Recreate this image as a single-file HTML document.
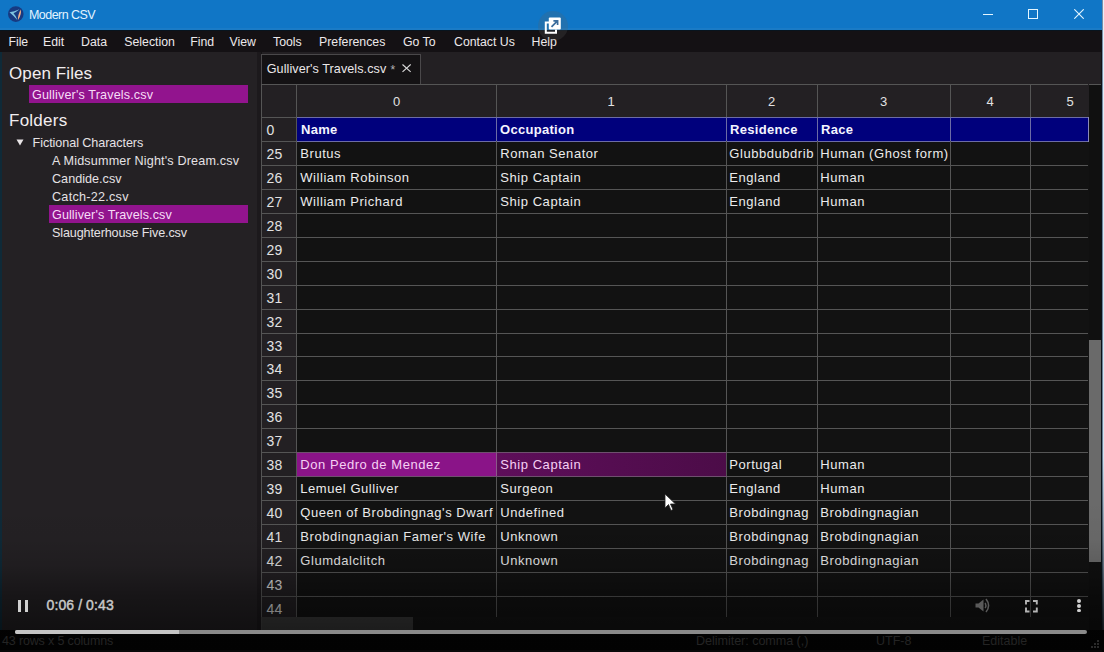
<!DOCTYPE html>
<html><head><meta charset="utf-8">
<style>
*{margin:0;padding:0;box-sizing:border-box}
html,body{width:1104px;height:652px;overflow:hidden;background:#141214;font-family:"Liberation Sans",sans-serif;color:#e8e6e8;position:relative}
.a{position:absolute;white-space:pre}
.mi{position:absolute;top:35px;font-size:12.3px;color:#ece8ea;white-space:pre}
.si{position:absolute;font-size:12.6px;color:#e6e2e4;white-space:pre}
.gt{position:absolute;font-size:13px;letter-spacing:0.55px;color:#ececec;white-space:pre}
.gb{position:absolute;font-size:13px;font-weight:bold;letter-spacing:0.3px;color:#f4f4ff;white-space:pre}
.rn{position:absolute;font-size:14px;letter-spacing:0.2px;color:#e2e2e2;white-space:pre}
.hd{position:absolute;font-size:13px;color:#e2e2e2;white-space:pre;text-align:center}
</style></head><body>

<div class="a" style="left:0;top:0;width:1104px;height:30px;background:#1076c6"></div>
<svg class="a" style="left:7px;top:6px" width="18" height="17" viewBox="0 0 18 17">
<circle cx="8.8" cy="8.1" r="7.8" fill="#173a82"/>
<path d="M2.5 6.2 Q7 5.5 12.5 3.2 Q8.5 6.5 6.5 7.2 Q8.5 9 10.5 14.2 Q7.5 10.5 2.5 6.2 Z" fill="#7ec4e0"/>
<path d="M13.6 3.5 Q15 8 11 14 Q10.6 9.5 13.6 3.5 Z" fill="#f4b088"/>
</svg>
<div class="a" style="left:29px;top:7.5px;font-size:12.5px;letter-spacing:-0.55px;color:#e3f4ff">Modern CSV</div>
<div class="a" style="left:983px;top:14px;width:10px;height:1px;background:#e4f6ff"></div>
<div class="a" style="left:1028px;top:9px;width:10px;height:10px;border:1px solid #e4f6ff"></div>
<svg class="a" style="left:1074px;top:9px" width="10" height="10" viewBox="0 0 10 10"><path d="M0.3 0.3 L9.7 9.7 M9.7 0.3 L0.3 9.7" stroke="#e4f6ff" stroke-width="1.1"/></svg>
<div class="a" style="left:0;top:30px;width:1104px;height:22px;background:#141114"></div>
<div class="a" style="left:0;top:30px;width:1102px;height:1px;background:#08141e"></div>
<div class="a" style="left:0;top:28px;width:1102px;height:2px;background:#1a7bc6"></div>
<div class="mi" style="left:8.4px">File</div>
<div class="mi" style="left:43px">Edit</div>
<div class="mi" style="left:81px">Data</div>
<div class="mi" style="left:124.3px">Selection</div>
<div class="mi" style="left:190.2px">Find</div>
<div class="mi" style="left:229.5px">View</div>
<div class="mi" style="left:273px">Tools</div>
<div class="mi" style="left:319px">Preferences</div>
<div class="mi" style="left:403px">Go To</div>
<div class="mi" style="left:454px">Contact Us</div>
<div class="mi" style="left:531.6px">Help</div>
<div class="a" style="left:0;top:52px;width:257px;height:578px;background:#242124"></div>
<div class="a" style="left:257px;top:52px;width:4px;height:578px;background:#1c191c"></div>
<div class="a" style="left:0;top:52px;width:2px;height:578px;background:#0f2a38"></div>
<div class="a" style="left:9px;top:63.5px;font-size:17px;letter-spacing:0.1px;color:#f2eef0">Open Files</div>
<div class="a" style="left:29px;top:85px;width:219px;height:18px;background:#92148e"></div>
<div class="si" style="left:32px;top:88px;letter-spacing:0.15px;color:#f6dcf6">Gulliver's Travels.csv</div>
<div class="a" style="left:9px;top:111px;font-size:17px;letter-spacing:0.25px;color:#f2eef0">Folders</div>
<svg class="a" style="left:16px;top:139px" width="8" height="7" viewBox="0 0 8 7"><path d="M0.5 0.5 L7.5 0.5 L4 6.5 Z" fill="#e8e4e6"/></svg>
<div class="si" style="left:32.6px;top:136px;letter-spacing:-0.07px">Fictional Characters</div>
<div class="a" style="left:49px;top:205px;width:199px;height:18px;background:#92148e"></div>
<div class="si" style="left:52px;top:154px;letter-spacing:0.17px;">A Midsummer Night's Dream.csv</div>
<div class="si" style="left:52px;top:172px;letter-spacing:0.02px;">Candide.csv</div>
<div class="si" style="left:52px;top:190px;letter-spacing:0.27px;">Catch-22.csv</div>
<div class="si" style="left:52px;top:208px;letter-spacing:0.09px; color:#f6dcf6;">Gulliver's Travels.csv</div>
<div class="si" style="left:52px;top:226px;letter-spacing:-0.13px;">Slaughterhouse Five.csv</div>
<div class="a" style="left:262px;top:52px;width:839px;height:33px;background:#232023"></div>
<div class="a" style="left:261px;top:54px;width:160px;height:31px;background:#141214;border:1px solid #4a484a;border-bottom:none"></div>
<div class="si" style="left:266.7px;top:62px;letter-spacing:0.08px;color:#ebe7e9">Gulliver's Travels.csv</div>
<div class="a" style="left:390.5px;top:62.5px;font-size:12px;color:#b4b4b4">*</div>
<svg class="a" style="left:401.8px;top:64.3px" width="9.2" height="8.4" viewBox="0 0 9.2 8.4"><path d="M0.5 0.5 L8.7 7.9 M8.7 0.5 L0.5 7.9" stroke="#dcdcdc" stroke-width="1.1"/></svg>
<div class="a" style="left:261px;top:84px;width:828px;height:533px;background:#121212;overflow:hidden">
<div class="a" style="left:0;top:0;width:828px;height:33px;background:#232023"></div>
<div class="a" style="left:0;top:0;width:35px;height:533px;background:#232023"></div>
<div class="a" style="left:36px;top:33px;width:792px;height:25px;background:#00007c;border:1px solid #6c6ca6;border-left:none;border-right:none"></div>
<div class="a" style="left:36px;top:368px;width:199px;height:24px;background:#8a1488"></div>
<div class="a" style="left:235px;top:368px;width:230px;height:24px;background:linear-gradient(90deg,#5e0e5a,#4c0c48)"></div>
<div class="a" style="left:0;top:33px;width:827px;height:1px;background:#555"></div>
<div class="a" style="left:0;top:81px;width:827px;height:1px;background:#555"></div>
<div class="a" style="left:0;top:105px;width:827px;height:1px;background:#555"></div>
<div class="a" style="left:0;top:129px;width:827px;height:1px;background:#555"></div>
<div class="a" style="left:0;top:153px;width:827px;height:1px;background:#555"></div>
<div class="a" style="left:0;top:177px;width:827px;height:1px;background:#555"></div>
<div class="a" style="left:0;top:201px;width:827px;height:1px;background:#555"></div>
<div class="a" style="left:0;top:225px;width:827px;height:1px;background:#555"></div>
<div class="a" style="left:0;top:249px;width:827px;height:1px;background:#555"></div>
<div class="a" style="left:0;top:272px;width:827px;height:1px;background:#555"></div>
<div class="a" style="left:0;top:296px;width:827px;height:1px;background:#555"></div>
<div class="a" style="left:0;top:320px;width:827px;height:1px;background:#555"></div>
<div class="a" style="left:0;top:344px;width:827px;height:1px;background:#555"></div>
<div class="a" style="left:0;top:368px;width:827px;height:1px;background:#555"></div>
<div class="a" style="left:0;top:392px;width:827px;height:1px;background:#555"></div>
<div class="a" style="left:0;top:416px;width:827px;height:1px;background:#555"></div>
<div class="a" style="left:0;top:440px;width:827px;height:1px;background:#555"></div>
<div class="a" style="left:0;top:464px;width:827px;height:1px;background:#555"></div>
<div class="a" style="left:0;top:488px;width:827px;height:1px;background:#555"></div>
<div class="a" style="left:0;top:512px;width:827px;height:1px;background:#555"></div>
<div class="a" style="left:0;top:536px;width:827px;height:1px;background:#555"></div>
<div class="a" style="left:0;top:0;width:827px;height:1px;background:#555"></div>
<div class="a" style="left:36px;top:33px;width:792px;height:1px;background:#6c6ca6"></div>
<div class="a" style="left:36px;top:57px;width:792px;height:1px;background:#6c6ca6"></div>
<div class="a" style="left:0;top:57px;width:36px;height:1px;background:#555"></div>
<div class="a" style="left:0px;top:0;width:1px;height:533px;background:#555"></div>
<div class="a" style="left:35px;top:0;width:1px;height:533px;background:#555"></div>
<div class="a" style="left:235px;top:0;width:1px;height:533px;background:#555"></div>
<div class="a" style="left:465px;top:0;width:1px;height:533px;background:#555"></div>
<div class="a" style="left:556px;top:0;width:1px;height:533px;background:#555"></div>
<div class="a" style="left:689px;top:0;width:1px;height:533px;background:#555"></div>
<div class="a" style="left:769px;top:0;width:1px;height:533px;background:#555"></div>
<div class="a" style="left:235px;top:33px;width:1px;height:24px;background:#6c6ca6"></div>
<div class="a" style="left:465px;top:33px;width:1px;height:24px;background:#6c6ca6"></div>
<div class="a" style="left:556px;top:33px;width:1px;height:24px;background:#6c6ca6"></div>
<div class="a" style="left:689px;top:33px;width:1px;height:24px;background:#6c6ca6"></div>
<div class="a" style="left:769px;top:33px;width:1px;height:24px;background:#6c6ca6"></div>
<div class="a" style="left:35px;top:368px;width:431px;height:1px;background:#6e506e"></div>
<div class="a" style="left:35px;top:392px;width:431px;height:1px;background:#6e506e"></div>
<div class="a" style="left:235px;top:368px;width:1px;height:24px;background:#8a5a88"></div>
<div class="a" style="left:827px;top:33px;width:1px;height:25px;background:#8a8ab8"></div>
<div class="a" style="left:828px;top:33px;width:20px;height:25px;background:#141414"></div>
<div class="hd" style="left:36px;top:10px;width:199px">0</div>
<div class="hd" style="left:235px;top:10px;width:230px">1</div>
<div class="hd" style="left:465px;top:10px;width:91px">2</div>
<div class="hd" style="left:556px;top:10px;width:133px">3</div>
<div class="hd" style="left:689px;top:10px;width:80px">4</div>
<div class="hd" style="left:769px;top:10px;width:80px">5</div>
<div class="rn" style="left:5.5px;top:38px">0</div>
<div class="gb" style="left:40px;top:38px;">Name</div>
<div class="gb" style="left:239px;top:38px;">Occupation</div>
<div class="gb" style="left:469px;top:38px;">Residence</div>
<div class="gb" style="left:560px;top:38px;">Race</div>
<div class="rn" style="left:5.5px;top:62px">25</div>
<div class="gt" style="left:39.3px;top:62px;">Brutus</div>
<div class="gt" style="left:239.3px;top:62px;">Roman Senator</div>
<div class="gt" style="left:468.3px;top:62px;">Glubbdubdrib</div>
<div class="gt" style="left:559.3px;top:62px;">Human (Ghost form)</div>
<div class="rn" style="left:5.5px;top:86px">26</div>
<div class="gt" style="left:39.3px;top:86px;">William Robinson</div>
<div class="gt" style="left:239.3px;top:86px;">Ship Captain</div>
<div class="gt" style="left:468.3px;top:86px;">England</div>
<div class="gt" style="left:559.3px;top:86px;">Human</div>
<div class="rn" style="left:5.5px;top:110px">27</div>
<div class="gt" style="left:39.3px;top:110px;">William Prichard</div>
<div class="gt" style="left:239.3px;top:110px;">Ship Captain</div>
<div class="gt" style="left:468.3px;top:110px;">England</div>
<div class="gt" style="left:559.3px;top:110px;">Human</div>
<div class="rn" style="left:5.5px;top:134px">28</div>
<div class="rn" style="left:5.5px;top:158px">29</div>
<div class="rn" style="left:5.5px;top:182px">30</div>
<div class="rn" style="left:5.5px;top:206px">31</div>
<div class="rn" style="left:5.5px;top:230px">32</div>
<div class="rn" style="left:5.5px;top:254px">33</div>
<div class="rn" style="left:5.5px;top:277px">34</div>
<div class="rn" style="left:5.5px;top:301px">35</div>
<div class="rn" style="left:5.5px;top:325px">36</div>
<div class="rn" style="left:5.5px;top:349px">37</div>
<div class="rn" style="left:5.5px;top:373px">38</div>
<div class="gt" style="left:39.3px;top:373px;color:#f6d0f4;">Don Pedro de Mendez</div>
<div class="gt" style="left:239.3px;top:373px;color:#f6d0f4;">Ship Captain</div>
<div class="gt" style="left:468.3px;top:373px;">Portugal</div>
<div class="gt" style="left:559.3px;top:373px;">Human</div>
<div class="rn" style="left:5.5px;top:397px">39</div>
<div class="gt" style="left:39.3px;top:397px;">Lemuel Gulliver</div>
<div class="gt" style="left:239.3px;top:397px;">Surgeon</div>
<div class="gt" style="left:468.3px;top:397px;">England</div>
<div class="gt" style="left:559.3px;top:397px;">Human</div>
<div class="rn" style="left:5.5px;top:421px">40</div>
<div class="gt" style="left:39.3px;top:421px;">Queen of Brobdingnag&#39;s Dwarf</div>
<div class="gt" style="left:239.3px;top:421px;">Undefined</div>
<div class="gt" style="left:468.3px;top:421px;">Brobdingnag</div>
<div class="gt" style="left:559.3px;top:421px;">Brobdingnagian</div>
<div class="rn" style="left:5.5px;top:445px">41</div>
<div class="gt" style="left:39.3px;top:445px;">Brobdingnagian Famer&#39;s Wife</div>
<div class="gt" style="left:239.3px;top:445px;">Unknown</div>
<div class="gt" style="left:468.3px;top:445px;">Brobdingnag</div>
<div class="gt" style="left:559.3px;top:445px;">Brobdingnagian</div>
<div class="rn" style="left:5.5px;top:469px">42</div>
<div class="gt" style="left:39.3px;top:469px;">Glumdalclitch</div>
<div class="gt" style="left:239.3px;top:469px;">Unknown</div>
<div class="gt" style="left:468.3px;top:469px;">Brobdingnag</div>
<div class="gt" style="left:559.3px;top:469px;">Brobdingnagian</div>
<div class="rn" style="left:5.5px;top:493px">43</div>
<div class="rn" style="left:5.5px;top:517px">44</div>
</div>
<div class="a" style="left:1089px;top:84px;width:12px;height:546px;background:#101010"></div>
<div class="a" style="left:1089px;top:340px;width:12px;height:222px;background:#6a6a6a"></div>
<div class="a" style="left:1089px;top:84px;width:12px;height:1px;background:#555"></div>
<div class="a" style="left:1101px;top:84px;width:1px;height:568px;background:#0c1218"></div>
<div class="a" style="left:1102px;top:0px;width:1px;height:652px;background:linear-gradient(180deg,#7890a8 0%,#6a8098 70%,#30404c 92%,#101418 100%)"></div>
<div class="a" style="left:1103px;top:0px;width:1px;height:652px;background:linear-gradient(180deg,#e4f0fa 0%,#d0e0ee 70%,#506070 92%,#181c20 100%)"></div>
<div class="a" style="left:262px;top:617px;width:827px;height:13px;background:#141414"></div>
<div class="a" style="left:262px;top:617px;width:151px;height:13px;background:#3c3c3c"></div>
<div class="a" style="left:0;top:630px;width:1104px;height:22px;background:#050505"></div>
<div class="a" style="left:0;top:650px;width:1102px;height:2px;background:#161616"></div>
<div class="a" style="left:261px;top:617px;width:1px;height:13px;background:#444"></div>
<div class="a" style="left:0;top:500px;width:1104px;height:152px;background:linear-gradient(180deg,rgba(0,0,0,0) 0%,rgba(0,0,0,0.03) 26%,rgba(0,0,0,0.12) 43%,rgba(0,0,0,0.36) 63%,rgba(0,0,0,0.5) 82%,rgba(0,0,0,0.6) 100%)"></div>
<div class="a" style="left:2px;top:634px;font-size:12.5px;letter-spacing:-0.15px;color:#242424">43 rows x 5 columns</div>
<div class="a" style="left:696px;top:634px;font-size:12.6px;letter-spacing:-0.05px;color:#242424">Delimiter: comma (,)</div>
<div class="a" style="left:876px;top:634px;font-size:12.5px;color:#242424">UTF-8</div>
<div class="a" style="left:982px;top:634px;font-size:12.5px;color:#242424">Editable</div>
<div class="a" style="left:15px;top:630px;width:1072px;height:4px;background:#8a8a8a;border-radius:2px"></div>
<div class="a" style="left:15px;top:630px;width:164px;height:4px;background:#c4c4c4;border-radius:2px 0 0 2px"></div>
<div class="a" style="left:18px;top:600px;width:3px;height:12px;background:#d0d0d0"></div>
<div class="a" style="left:25px;top:600px;width:3px;height:12px;background:#d0d0d0"></div>
<div class="a" style="left:46.5px;top:597px;font-size:14px;letter-spacing:0.1px;-webkit-text-stroke:0.45px #c8c8c8;color:#c8c8c8">0:06 / 0:43</div>
<svg class="a" style="left:974px;top:597px" width="18" height="17" viewBox="0 0 18 17">
<path d="M1.5 6.5 L4.5 6.5 L9.5 2.5 L9.5 14.5 L4.5 10.5 L1.5 10.5 Z" fill="#5a5a5a"/>
<path d="M11.2 5.8 Q12.6 8.5 11.2 11.2" fill="none" stroke="#5a5a5a" stroke-width="1.5"/>
<path d="M12 2 Q17.2 8.5 12 15" fill="none" stroke="#5a5a5a" stroke-width="1.5"/>
</svg>
<svg class="a" style="left:1024.5px;top:599.5px" width="13" height="13" viewBox="0 0 13 13">
<path d="M1 4.5 L1 1 L4.5 1 M8 1 L11.8 1 L11.8 4.5 M11.8 7.5 L11.8 11.5 L8 11.5 M4.5 11.5 L1 11.5 L1 7.5" fill="none" stroke="#b4b4b4" stroke-width="1.9"/>
</svg>
<div class="a" style="left:1077.2px;top:599.2px;width:3.6px;height:3.6px;border-radius:2px;background:#d0d0d0"></div>
<div class="a" style="left:1077.2px;top:604px;width:3.6px;height:3.6px;border-radius:2px;background:#d0d0d0"></div>
<div class="a" style="left:1077.2px;top:608.8px;width:3.6px;height:3.6px;border-radius:2px;background:#d0d0d0"></div>
<div class="a" style="left:538px;top:11px;width:30px;height:30px;border-radius:15px;background:rgba(95,95,95,0.22)"></div>
<svg class="a" style="left:544px;top:17px" width="18" height="18" viewBox="0 0 18 18">
<path d="M5 5.5 L1.8 5.5 L1.8 15.8 L12 15.8 L12 12.5" fill="none" stroke="#fff" stroke-width="2"/>
<rect x="4.8" y="0.6" width="12" height="12" rx="1" fill="#fff"/>
<path d="M7.5 9.8 L13.2 4.1 M9.4 3.8 L13.6 3.8 L13.6 8" fill="none" stroke="#3a6c9c" stroke-width="1.7"/>
</svg>
<svg class="a" style="left:664px;top:493px" width="14" height="19" viewBox="0 0 14 19">
<path d="M1 1 L1 15 L4.5 11.5 L7 17.5 L9 16.5 L6.5 11 L11.5 11 Z" fill="#fff" stroke="#222" stroke-width="0.8"/>
</svg>
<div class="a" style="left:1097px;top:640px;width:2px;height:2px;background:#2a2a2a"></div>
<div class="a" style="left:1094px;top:643px;width:2px;height:2px;background:#2a2a2a"></div>
<div class="a" style="left:1097px;top:643px;width:2px;height:2px;background:#2a2a2a"></div>
<div class="a" style="left:1090.5px;top:646px;width:2px;height:2px;background:#2a2a2a"></div>
<div class="a" style="left:1094px;top:646px;width:2px;height:2px;background:#2a2a2a"></div>
<div class="a" style="left:1097px;top:646px;width:2px;height:2px;background:#2a2a2a"></div>
</body></html>
